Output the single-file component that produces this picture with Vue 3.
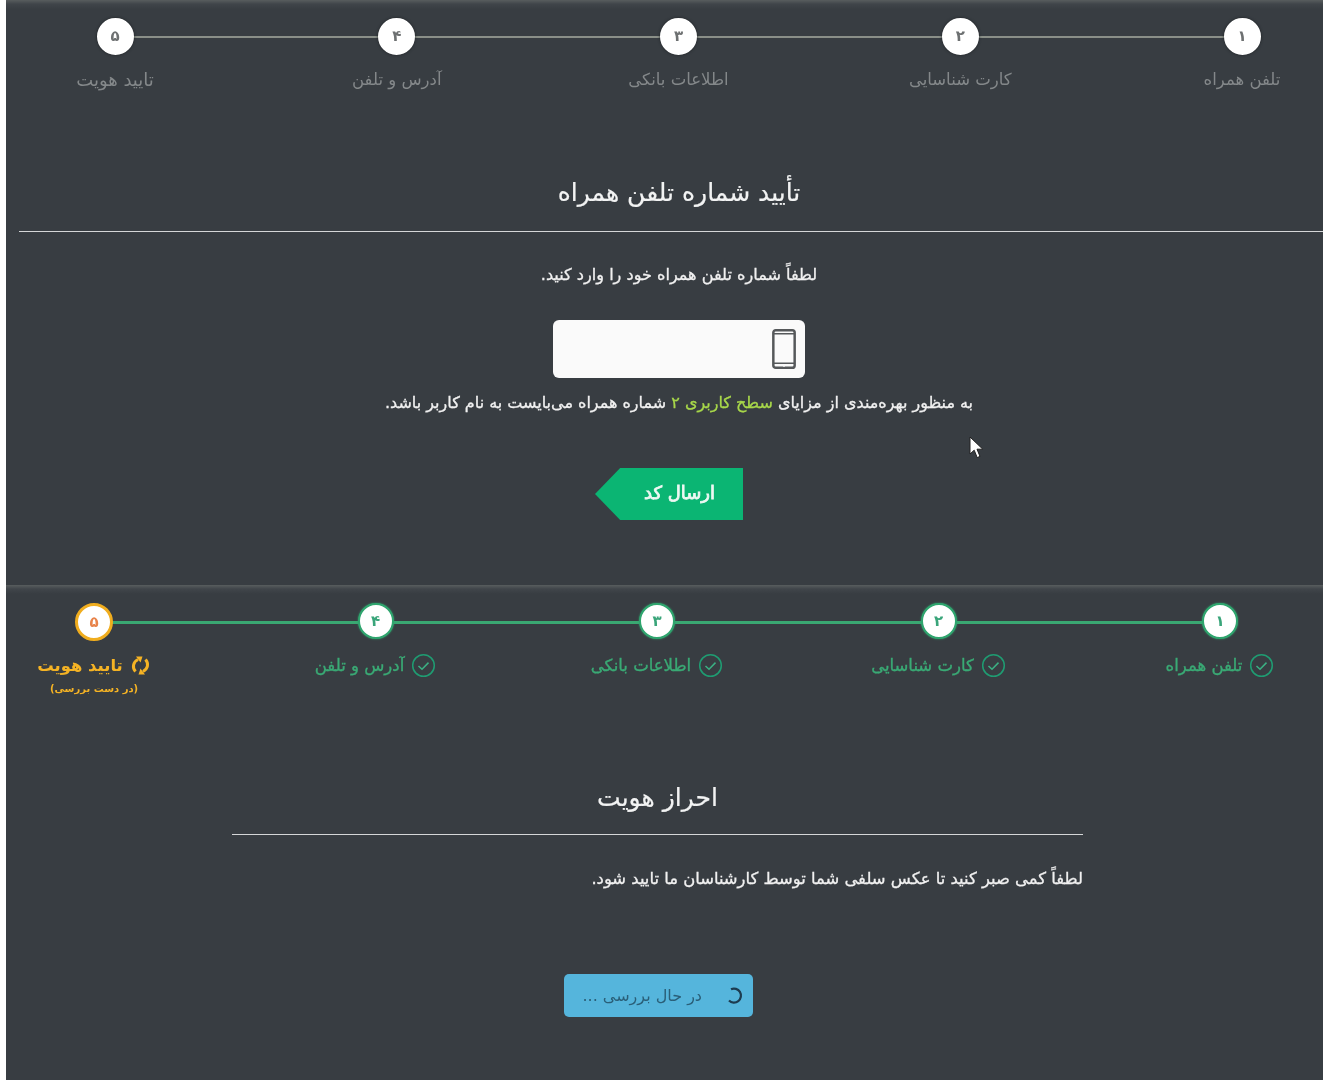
<script setup>
const pending = [
  { n: '۱', label: 'تلفن همراه' },
  { n: '۲', label: 'کارت شناسایی' },
  { n: '۳', label: 'اطلاعات بانکی' },
  { n: '۴', label: 'آدرس و تلفن' },
  { n: '۵', label: 'تایید هویت' }
]
const done = pending.slice(0, 4)
</script>

<template>
  <div class="page">
    <section class="panel first">
      <div class="stepper stepper-a">
        <div class="track"></div>
        <div v-for="s in pending" :key="s.n" class="step">
          <div class="circle">{{ s.n }}</div>
          <div class="label">{{ s.label }}</div>
        </div>
      </div>

      <div class="body-a">
        <h2 class="title title-a">تأیید شماره تلفن همراه</h2>
        <p class="lead">لطفاً شماره تلفن همراه خود را وارد کنید.</p>
        <div class="phone-input">
          <svg class="phone" width="24" height="40" viewBox="0 0 25 42">
            <rect x="1.3" y="1.3" width="22.4" height="39.4" rx="2.5" fill="none" stroke="#55585a" stroke-width="2.6" />
            <path d="M1.5 5H23.5M1.5 36H23.5" stroke="#55585a" stroke-width="1.6" />
            <circle cx="12.5" cy="38.4" r="1.3" fill="#fafafa" />
          </svg>
        </div>
        <p class="note">به منظور بهره‌مندی از مزایای <span class="hl">سطح کاربری ۲</span> شماره همراه می‌بایست به نام کاربر باشد.</p>
        <button class="send">ارسال کد</button>
      </div>

      <svg class="cursor" width="16" height="24" viewBox="0 0 16 24">
        <path d="M1 1V18L5.2 14.2L8.2 21.6L11 20.4L8 13.2H13.8Z" fill="#fff" stroke="#222" stroke-width="1" />
      </svg>
    </section>

    <section class="panel second">
      <div class="stepper stepper-b">
        <div class="track green"></div>
        <div v-for="s in done" :key="s.n" class="step">
          <div class="circle ok">{{ s.n }}</div>
          <div class="label ok-label">
            <svg width="25" height="25" viewBox="0 0 25 25">
              <circle cx="12.5" cy="12.5" r="10.8" fill="none" stroke="#1f9c72" stroke-width="1.5" />
              <path d="M7.5 13L11 16.2L17.5 9.6" fill="none" stroke="#3bb083" stroke-width="1.5" />
            </svg>
            <span>{{ s.label }}</span>
          </div>
        </div>
        <div class="step">
          <div class="circle wait">۵</div>
          <div class="label wait-label">
            <svg width="21" height="21" viewBox="0 0 21 21">
              <path d="M15.5 4.5C19 8.5 18 14 13 16.5M5.5 16.5C2 12.5 3 7 8 4.5" fill="none" stroke="#f5b324" stroke-width="3" />
              <path d="M10.5 13.5L15 19.5L8.5 19.5ZM10.5 7.5L6 1.5L12.5 1.5Z" fill="#f5b324" />
            </svg>
            <span>تایید هویت</span>
          </div>
          <div class="sub">(در دست بررسی)</div>
        </div>
      </div>

      <div class="body-b">
        <h2 class="title title-b">احراز هویت</h2>
        <p class="lead-b">لطفاً کمی صبر کنید تا عکس سلفی شما توسط کارشناسان ما تایید شود.</p>
        <div class="status">
          <svg width="19" height="19" viewBox="0 0 19 19">
            <path d="M6 3.2A7 7 0 1 1 4 14.5" fill="none" stroke="#1d3c50" stroke-width="2.2" />
          </svg>
          <span>در حال بررسی ...</span>
        </div>
      </div>
    </section>
  </div>
</template>

<style>
html, body {
  background: #fff;
}
</style>

<style scoped>
.page {
  width: 1331px;
  height: 1080px;
  box-sizing: border-box;
  padding: 0 8px 0 6px;
  background: #fff;
  overflow: hidden;
  font-family: "DejaVu Sans", sans-serif;
  direction: rtl;
  filter: blur(0.35px);
}
.panel {
  position: relative;
  background: linear-gradient(#585d5e 0, #40454a 4px, #383d42 9px);
}
.first {
  height: 585px;
}
.second {
  height: 495px;
}
.stepper {
  position: relative;
  display: flex;
  justify-content: space-between;
}
.stepper-a {
  padding: 18px 16px 0 44px;
}
.stepper-b {
  padding: 18px 38px 0 23px;
}
.track {
  position: absolute;
  top: 36px;
  left: 105px;
  right: 70px;
  height: 2px;
  background: #8a8f88;
}
.track.green {
  top: 36px;
  left: 85px;
  right: 90px;
  height: 2.5px;
  background: #3aa872;
}
.step {
  position: relative;
  width: 130px;
  display: flex;
  flex-direction: column;
  align-items: center;
}
.step:last-child .label:not(.wait-label) {
  font-size: 18px;
}
.circle {
  width: 33px;
  height: 33px;
  box-sizing: content-box;
  border: 2px solid #fff;
  border-radius: 50%;
  background: #fff;
  box-shadow: 0 0 3px #1d2023;
  color: #6d7071;
  font-size: 15px;
  font-weight: 700;
  line-height: 33px;
  text-align: center;
}
.circle.ok {
  width: 32px;
  height: 32px;
  line-height: 32px;
  border-color: #2fa56e;
  color: #3aa57a;
  box-shadow: 0 0 2px #2fa56e;
}
.circle.wait {
  width: 32px;
  height: 32px;
  line-height: 32px;
  border: 3px solid #f0ad1e;
  color: #e8834a;
  box-shadow: none;
}
.label {
  margin-top: 15px;
  color: #84888a;
  font-size: 16.5px;
  line-height: 20px;
  white-space: nowrap;
}
.ok-label,
.wait-label {
  display: flex;
  align-items: center;
  gap: 7px;
  margin-top: 14px;
  height: 25px;
  line-height: 25px;
  -webkit-text-stroke: 0.35px currentColor;
}
.ok-label {
  color: #3aaa75;
}
.wait-label {
  margin-top: 12px;
  color: #f5b324;
  font-size: 16.4px;
  font-weight: 700;
  -webkit-text-stroke: 0;
}
.sub {
  color: #f5b324;
  font-size: 10px;
  font-weight: 700;
  line-height: 14px;
  margin-top: 4px;
}
.body-a {
  margin-top: 83px;
  padding-left: 13px;
  display: flex;
  flex-direction: column;
  align-items: center;
}
.title {
  margin: 0;
  color: #f2f3f3;
  font-weight: 400;
  font-size: 25px;
  line-height: 40px;
  border-bottom: 1px solid #d5d7d8;
  text-align: center;
  align-self: stretch;
  -webkit-text-stroke: 0.2px currentColor;
}
.title-a {
  padding: 0 0 18px 16px;
}
.lead {
  margin: 32px 0 0 16px;
  color: #f1f1f1;
  font-size: 16.1px;
  line-height: 22px;
  -webkit-text-stroke: 0.3px currentColor;
}
.phone-input {
  margin: 34px 0 0 16px;
  width: 252px;
  height: 58px;
  box-sizing: border-box;
  padding: 9px 9px;
  background: #fafafa;
  border-radius: 6px;
}
.phone {
  display: block;
}
.note {
  margin: 14px 0 0 16px;
  color: #f1f1f1;
  font-size: 16px;
  line-height: 22px;
  -webkit-text-stroke: 0.3px currentColor;
  white-space: nowrap;
}
.hl {
  color: #a8d84a;
}
.send {
  margin: 54px 4px 0 0;
  width: 148px;
  height: 52px;
  padding: 0 0 4px 21px;
  border: 0;
  background: #0bb573;
  color: #eef8f3;
  font-family: inherit;
  font-size: 18px;
  font-weight: 400;
  -webkit-text-stroke: 0.8px currentColor;
  clip-path: polygon(0 50%, 17% 0, 100% 0, 100% 100%, 17% 100%);
}
.cursor {
  position: absolute;
  left: 963px;
  top: 436px;
}
.body-b {
  margin: 82px 240px 0 226px;
  display: flex;
  flex-direction: column;
}
.title-b {
  padding-bottom: 16px;
}
.lead-b {
  margin: 33px 0 0;
  color: #f1f1f1;
  font-size: 16.4px;
  line-height: 22px;
  -webkit-text-stroke: 0.3px currentColor;
  white-space: nowrap;
}
.status {
  margin: 84px 330px 0 0;
  width: 189px;
  height: 43px;
  box-sizing: border-box;
  padding: 0 9px;
  display: flex;
  align-items: center;
  gap: 23px;
  background: #55b5dc;
  border-radius: 5px;
  color: #2a5f78;
  font-size: 16px;
}
</style>
